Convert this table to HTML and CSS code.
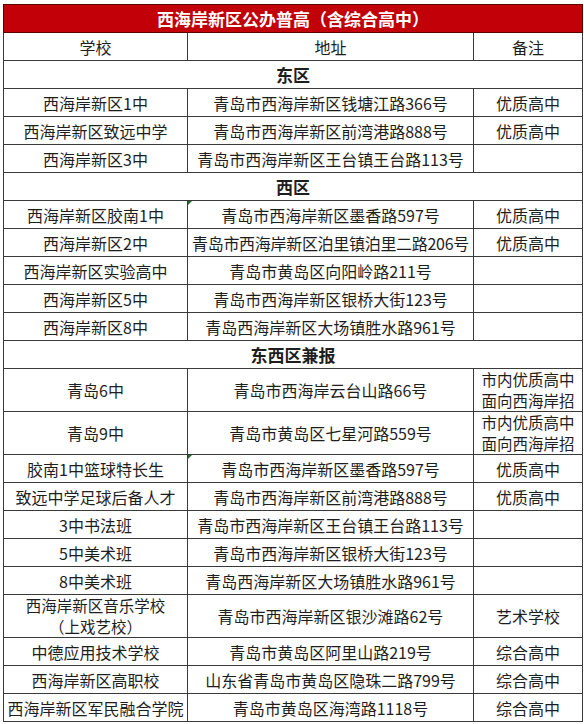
FILE: index.html
```html
<!DOCTYPE html>
<html lang="zh-CN">
<head>
<meta charset="utf-8">
<title>西海岸新区公办普高</title>
<link rel="stylesheet" href="styles.css">
</head>
<body>
<table class="sheet">
  <colgroup>
    <col class="c-school">
    <col class="c-addr">
    <col class="c-note">
  </colgroup>
  <tbody>
    <tr class="title"><td colspan="3">西海岸新区公办普高（含综合高中）</td></tr>
    <tr class="head"><td>学校</td><td>地址</td><td>备注</td></tr>
    <tr class="section"><td colspan="3">东区</td></tr>
    <tr><td>西海岸新区1中</td><td>青岛市西海岸新区钱塘江路366号</td><td>优质高中</td></tr>
    <tr><td>西海岸新区致远中学</td><td>青岛市西海岸新区前湾港路888号</td><td>优质高中</td></tr>
    <tr><td>西海岸新区3中</td><td>青岛市西海岸新区王台镇王台路113号</td><td></td></tr>
    <tr class="section"><td colspan="3">西区</td></tr>
    <tr><td>西海岸新区胶南1中</td><td class="mark">青岛市西海岸新区墨香路597号</td><td>优质高中</td></tr>
    <tr><td>西海岸新区2中</td><td class="tight">青岛市西海岸新区泊里镇泊里二路206号</td><td>优质高中</td></tr>
    <tr><td>西海岸新区实验高中</td><td>青岛市黄岛区向阳岭路211号</td><td></td></tr>
    <tr><td>西海岸新区5中</td><td>青岛市西海岸新区银桥大街123号</td><td></td></tr>
    <tr><td>西海岸新区8中</td><td>青岛西海岸新区大场镇胜水路961号</td><td></td></tr>
    <tr class="section"><td colspan="3">东西区兼报</td></tr>
    <tr class="double"><td>青岛6中</td><td>青岛市西海岸云台山路66号</td><td><span class="ln">市内优质高中</span><span class="ln">面向西海岸招</span></td></tr>
    <tr class="double"><td>青岛9中</td><td>青岛市黄岛区七星河路559号</td><td><span class="ln">市内优质高中</span><span class="ln">面向西海岸招</span></td></tr>
    <tr><td>胶南1中篮球特长生</td><td class="mark">青岛市西海岸新区墨香路597号</td><td>优质高中</td></tr>
    <tr><td>致远中学足球后备人才</td><td>青岛市西海岸新区前湾港路888号</td><td>优质高中</td></tr>
    <tr><td>3中书法班</td><td>青岛市西海岸新区王台镇王台路113号</td><td></td></tr>
    <tr><td>5中美术班</td><td>青岛市西海岸新区银桥大街123号</td><td></td></tr>
    <tr><td>8中美术班</td><td>青岛西海岸新区大场镇胜水路961号</td><td></td></tr>
    <tr class="double"><td><span class="ln">西海岸新区音乐学校</span><span class="ln">（上戏艺校）</span></td><td>青岛市西海岸新区银沙滩路62号</td><td>艺术学校</td></tr>
    <tr><td>中德应用技术学校</td><td>青岛市黄岛区阿里山路219号</td><td>综合高中</td></tr>
    <tr><td>西海岸新区高职校</td><td>山东省青岛市黄岛区隐珠二路799号</td><td>综合高中</td></tr>
    <tr><td>西海岸新区军民融合学院</td><td>青岛市黄岛区海湾路1118号</td><td>综合高中</td></tr>
  </tbody>
</table>
</body>
</html>
```
FILE: styles.css
```css
html, body {
  margin: 0;
  background: #ffffff;
}
body {
  padding: 4px 0 0 3px;
  font-family: "Noto Sans CJK SC", "Noto Sans", "DejaVu Sans", sans-serif;
  color: #1e1e1e;
}
.sheet {
  border-collapse: collapse;
  table-layout: fixed;
  width: 579px;
  font-size: 16px;
}
.c-school { width: 184px; }
.c-addr { width: 286px; }
.c-note { width: 109px; }
.sheet td {
  border: 1px solid #3a3a3a;
  height: 27px;
  padding: 0 1px;
  text-align: center;
  vertical-align: middle;
  line-height: 20px;
  white-space: nowrap;
  overflow: hidden;
}
.sheet tr.double td {
  height: 42px;
  line-height: 21px;
}
.sheet .ln {
  display: block;
  height: 21px;
  font-size: 15.5px;
}
.sheet tr.title td {
  background: #c20008;
  color: #ffffff;
  font-weight: bold;
  font-size: 17px;
  border-color: #5a0000;
}
.sheet tr.section td {
  font-weight: bold;
  font-size: 17px;
}
.sheet td.tight {
  letter-spacing: -0.3px;
}
.sheet td.mark {
  position: relative;
}
.sheet td.mark::before {
  content: "";
  position: absolute;
  left: 0;
  top: 0;
  border-top: 4px solid #1f6b2a;
  border-right: 4px solid transparent;
}
```
